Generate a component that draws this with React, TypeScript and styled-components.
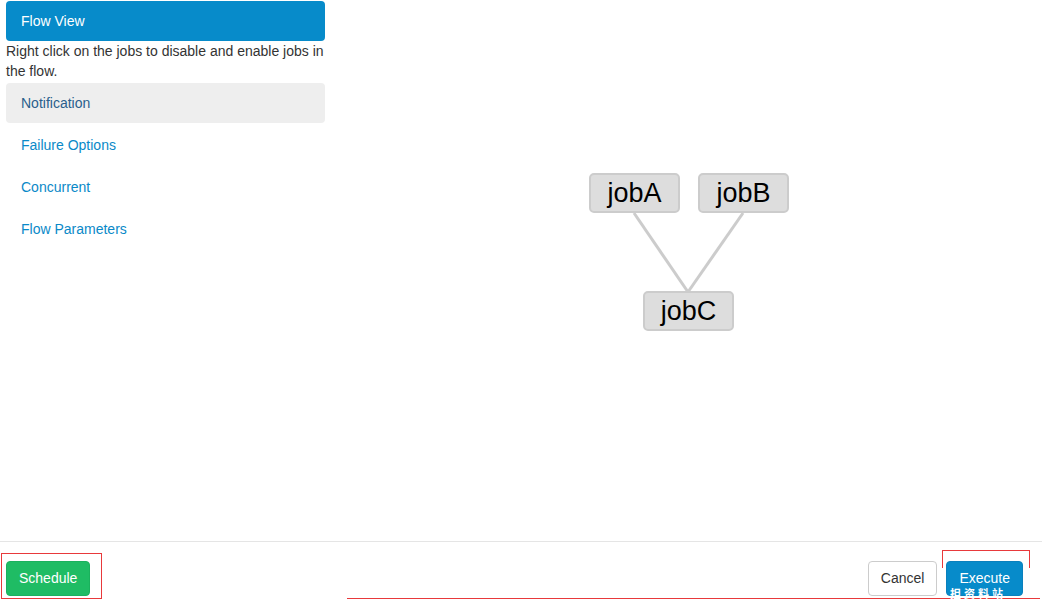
import React from "react";
import styled, { createGlobalStyle } from "styled-components";

const Global = createGlobalStyle`
  html, body { margin: 0; padding: 0; background: #fff; }
  body { font-family: "Liberation Sans", Arial, sans-serif; font-size: 14px; color: #333; }
  * { box-sizing: border-box; }
`;

const Page = styled.div`
  position: relative;
  height: 606px;
  display: flex;
  flex-direction: column;
  overflow: hidden;
`;

const Main = styled.div`
  flex: 1;
  display: flex;
  min-height: 0;
`;

const Sidebar = styled.ul`
  list-style: none;
  margin: 0;
  padding: 1px 0 0 6px;
  width: 325px;
  flex: none;
  display: flex;
  flex-direction: column;
`;

const NavItem = styled.li<{ $state?: "active" | "focus" | "normal" }>`
  height: 40px;
  margin-top: ${(p) => (p.$state === "active" ? "0" : "2px")};
  padding: 0 15px;
  display: flex;
  align-items: center;
  border-radius: 4px;
  font-size: 14px;
  background: ${(p) =>
    p.$state === "active" ? "#078bca" : p.$state === "focus" ? "#eeeeee" : "transparent"};
  color: ${(p) =>
    p.$state === "active" ? "#fff" : p.$state === "focus" ? "#2a5f8c" : "#0a89c8"};
`;

const Hint = styled.li`
  font-size: 14px;
  line-height: 20px;
  color: #333;
`;

const Canvas = styled.div`
  position: relative;
  flex: 1;
`;

const Edges = styled.svg`
  position: absolute;
  left: 0;
  top: 0;
  width: 100%;
  height: 100%;
`;

const Node = styled.div<{ $x: number; $y: number }>`
  position: absolute;
  left: ${(p) => p.$x}px;
  top: ${(p) => p.$y}px;
  width: 91px;
  height: 40px;
  background: #dddddd;
  border: 2px solid #cccccc;
  border-radius: 5px;
  display: flex;
  align-items: center;
  justify-content: center;
  font-size: 27px;
  color: #000;
`;

const Footer = styled.div`
  height: 65px;
  flex: none;
  border-top: 1px solid #e5e5e5;
  padding: 19px 19px 0 6px;
  display: flex;
  align-items: flex-start;
  gap: 9px;
`;

const Spacer = styled.div`
  flex: 1;
`;

const Button = styled.button<{ $variant: "success" | "default" | "primary" }>`
  height: 35px;
  padding: 0 12px 1px;
  border-radius: 4px;
  font-family: "Liberation Sans", Arial, sans-serif;
  font-size: 14px;
  border: 1px solid
    ${(p) => (p.$variant === "success" ? "#1bb15d" : p.$variant === "primary" ? "#0a80bd" : "#cccccc")};
  background: ${(p) =>
    p.$variant === "success" ? "#1fbc64" : p.$variant === "primary" ? "#078bca" : "#fff"};
  color: ${(p) => (p.$variant === "default" ? "#333" : "#fff")};
`;

const Mark = styled.div<{ $x: number; $y: number; $w: number; $h: number }>`
  position: absolute;
  left: ${(p) => p.$x}px;
  top: ${(p) => p.$y}px;
  width: ${(p) => p.$w}px;
  height: ${(p) => p.$h}px;
  border: 1px solid #e8393b;
  pointer-events: none;
`;

const OpenMark = styled(Mark)`
  border-bottom: none;
`;

const Rule = styled.div`
  position: absolute;
  left: 347px;
  right: 2px;
  top: 598px;
  height: 1px;
  background: #e8393b;
`;

const Watermark = styled.div`
  position: absolute;
  left: 950px;
  top: 588px;
  font-family: "Noto Sans CJK SC", sans-serif;
  font-weight: 700;
  font-size: 11px;
  letter-spacing: 3px;
  line-height: 10px;
  color: #fff;
`;

export default function App() {
  return (
    <Page>
      <Global />
      <Main>
        <Sidebar>
          <NavItem $state="active">Flow View</NavItem>
          <Hint>Right click on the jobs to disable and enable jobs in the flow.</Hint>
          <NavItem $state="focus">Notification</NavItem>
          <NavItem>Failure Options</NavItem>
          <NavItem>Concurrent</NavItem>
          <NavItem>Flow Parameters</NavItem>
        </Sidebar>
        <Canvas>
          <Edges>
            <line x1="309" y1="213" x2="363" y2="292" stroke="#cccccc" strokeWidth="3" />
            <line x1="418" y1="213" x2="363" y2="292" stroke="#cccccc" strokeWidth="3" />
          </Edges>
          <Node $x={264} $y={173}>jobA</Node>
          <Node $x={373} $y={173}>jobB</Node>
          <Node $x={318} $y={291}>jobC</Node>
        </Canvas>
      </Main>
      <Footer>
        <Button $variant="success">Schedule</Button>
        <Spacer />
        <Button $variant="default">Cancel</Button>
        <Button $variant="primary">Execute</Button>
      </Footer>
      <Mark $x={1} $y={553} $w={101} $h={46} />
      <OpenMark $x={942} $y={550} $w={88} $h={18} />
      <Rule />
      <Watermark>担资料站</Watermark>
    </Page>
  );
}
